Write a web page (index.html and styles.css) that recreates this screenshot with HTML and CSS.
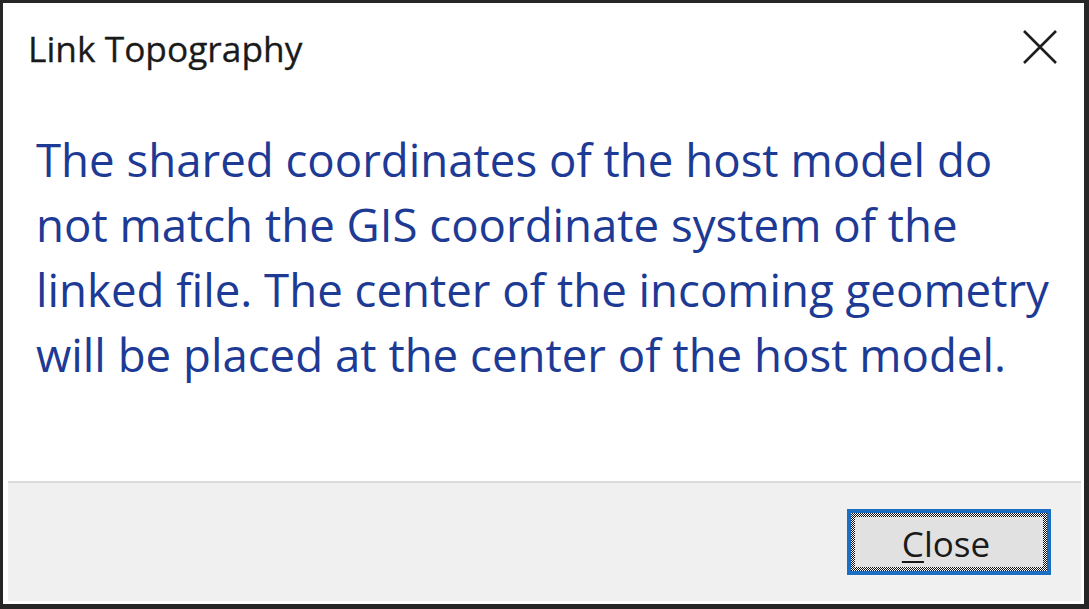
FILE: index.html
```html
<!DOCTYPE html>
<html lang="en">
<head>
    <meta charset="UTF-8">
    <meta name="viewport" content="width=device-width, initial-scale=1.0">
    <title>Link Topography</title>
    <link rel="stylesheet" href="styles.css">
</head>
<body>
    <section class="dialog">
        <header class="dialog-header">
            <h1 class="title">Link Topography</h1>
            <button class="close-x" aria-label="Close">
                <svg width="34" height="34" viewBox="0 0 34 34">
                    <path d="M1 1 L33 33 M33 1 L1 33" stroke="#1e1e1e" stroke-width="2.6" fill="none"/>
                </svg>
            </button>
        </header>

        <div class="dialog-body">
            <p class="message">
                The shared coordinates of the host model do<br>
                not match the GIS coordinate system of the<br>
                linked file. The center of the incoming geometry<br>
                will be placed at the center of the host model.
            </p>
        </div>

        <footer class="dialog-footer">
            <button class="close-button">
                <span class="focus-ring">
                    <span class="label"><u>C</u>lose</span>
                </span>
            </button>
        </footer>
    </section>
</body>
</html>
```

FILE: styles.css
```css
* {
    box-sizing: border-box;
}

body {
    margin: 0;
    width: 1089px;
    height: 609px;
    padding: 3px 5px 5px 3px;
    background-color: #262626;
    font-family: "Open Sans", "Noto Sans", sans-serif;
}

.dialog {
    --title-color: #1a1a1a;
    --message-color: #1d3a95;
    --footer-background: #f0f0f0;
    --accent: #1b6ec2;

    height: 100%;
    background-color: white;
    display: flex;
    flex-direction: column;
}

.dialog-header {
    display: flex;
    justify-content: space-between;
    align-items: flex-start;
    padding: 22px 27px 0 25px;
}

.dialog-header > .title {
    margin: 0;
    font-size: 35.3px;
    line-height: 46px;
    font-weight: 400;
    color: var(--title-color);
    -webkit-text-stroke: 0.3px var(--title-color);
}

.close-x {
    border: none;
    background: none;
    padding: 0;
    margin-top: 5px;
    width: 34px;
    height: 34px;
}

.close-x svg {
    display: block;
}

.dialog-body {
    flex: 1;
    padding: 56px 0 0 33px;
}

.message {
    margin: 0;
    font-size: 45.6px;
    line-height: 65px;
    color: var(--message-color);
    white-space: nowrap;
}

.dialog-footer {
    height: 120px;
    margin: 0 3px 3px 5px;
    border-top: 2px solid #dadada;
    background-color: var(--footer-background);
    display: flex;
    justify-content: flex-end;
    align-items: center;
    padding-right: 30px;
}

.close-button {
    width: 204px;
    height: 66px;
    padding: 0;
    border: 4px solid var(--accent);
    background-color: #e1e1e1;
    font-family: inherit;
    cursor: default;
}

.close-button > .focus-ring {
    display: block;
    height: 100%;
    padding: 4px;
    background: repeating-conic-gradient(#111 0 25%, #fff 0 50%) 0 0 / 2px 2px;
}

.close-button .label {
    display: flex;
    align-items: center;
    justify-content: center;
    height: 100%;
    background-color: #e1e1e1;
    font-size: 35px;
    color: #1a1a1a;
    padding: 2px 6px 0 0;
}

.close-button u {
    text-decoration-thickness: 2px;
    text-underline-offset: 4px;
}
```
